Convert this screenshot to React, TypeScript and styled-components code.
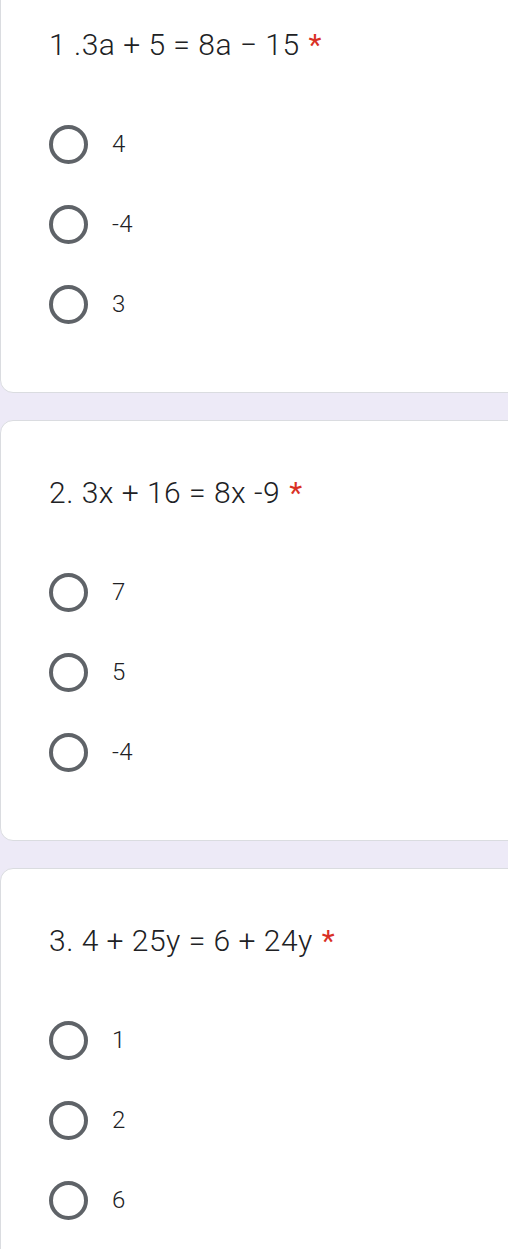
import React from "react";
import styled, { createGlobalStyle } from "styled-components";

const Global = createGlobalStyle`
  html, body {
    margin: 0;
    padding: 0;
    background: #edeaf7;
    overflow: hidden;
  }
  body {
    font-family: Roboto, "Liberation Sans", Arial, sans-serif;
    -webkit-font-smoothing: antialiased;
  }
`;

const Page = styled.div`
  display: flex;
  flex-direction: column;
  gap: 27px;
  margin-top: -28px;
  margin-right: -24px;
`;

const Card = styled.section`
  box-sizing: border-box;
  height: 421px;
  background: #ffffff;
  border: 1px solid #dadce0;
  border-radius: 13px;
  padding: 52px 0 48px 48px;
  display: flex;
  flex-direction: column;
`;

const Title = styled.div`
  font-size: 30px;
  font-weight: 300;
  line-height: 40px;
  letter-spacing: 0.5px;
  color: #202124;
  margin-bottom: 39px;
`;

const Required = styled.span`
  color: #d93025;
  margin-left: 9px;
  font-weight: 400;
`;

const Options = styled.div`
  display: flex;
  flex-direction: column;
`;

const Option = styled.label`
  display: flex;
  align-items: center;
  height: 80px;
  gap: 24px;
  font-size: 24px;
  font-weight: 300;
  letter-spacing: 0.3px;
  color: #202124;
`;

const Radio = styled.span`
  box-sizing: border-box;
  width: 39px;
  height: 39px;
  border-radius: 50%;
  border: 4px solid #5f6368;
  flex-shrink: 0;
`;

const questions = [
  { title: "1 .3a + 5 = 8a \u2212 15", options: ["4", "-4", "3"] },
  { title: "2. 3x + 16 = 8x -9", options: ["7", "5", "-4"] },
  { title: "3. 4 + 25y = 6 + 24y", options: ["1", "2", "6"] },
];

export default function App() {
  return (
    <>
      <Global />
      <Page>
        {questions.map((q) => (
          <Card key={q.title}>
            <Title>
              {q.title}
              <Required>*</Required>
            </Title>
            <Options>
              {q.options.map((o) => (
                <Option key={o}>
                  <Radio />
                  {o}
                </Option>
              ))}
            </Options>
          </Card>
        ))}
      </Page>
    </>
  );
}
